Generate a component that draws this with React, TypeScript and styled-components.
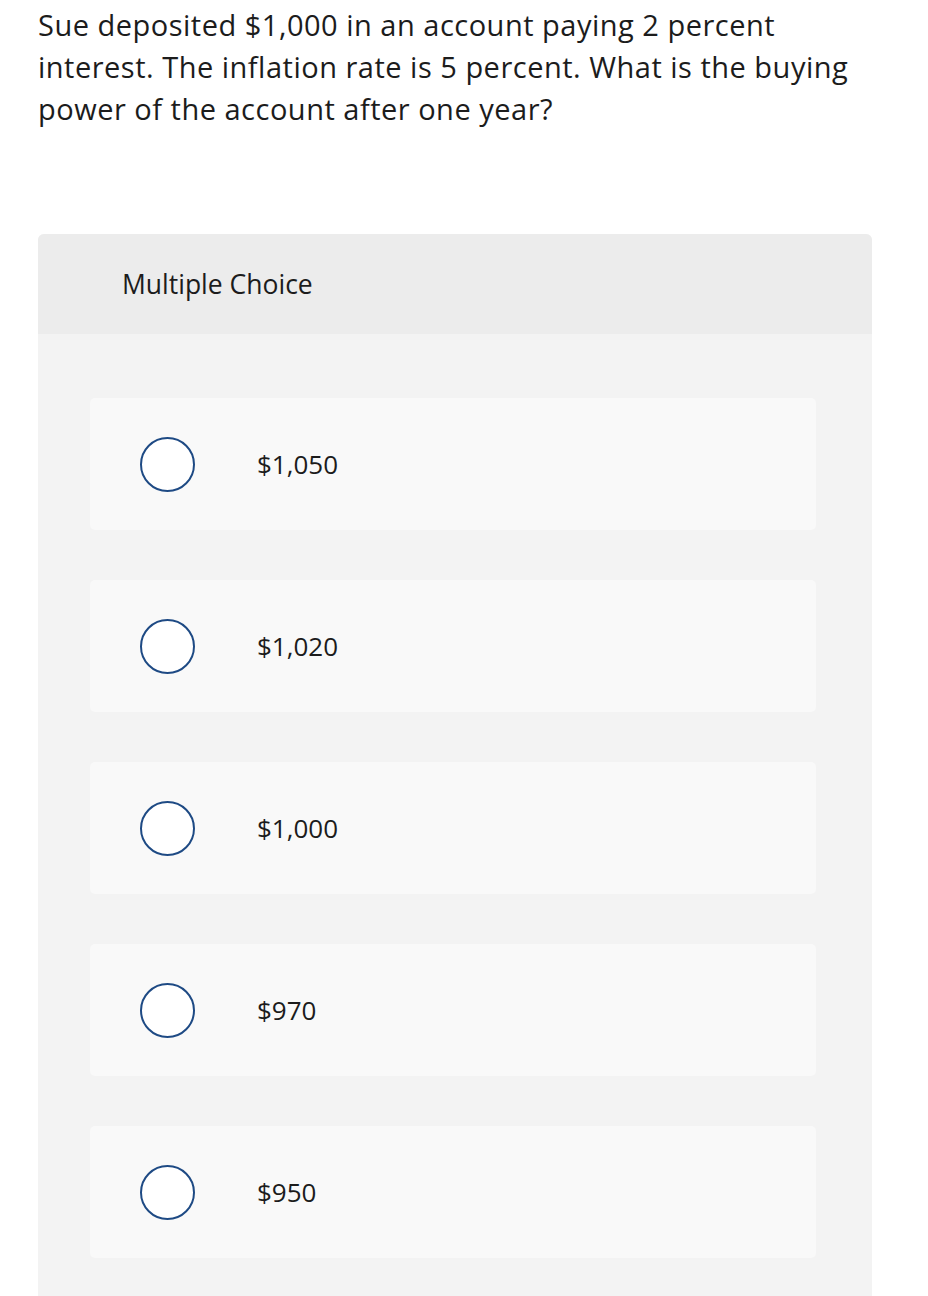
import React from 'react';
import styled, { createGlobalStyle } from 'styled-components';

const GlobalStyle = createGlobalStyle`
  html, body {
    margin: 0;
    padding: 0;
    background: #ffffff;
  }
  body {
    font-family: "Open Sans", Lato, "Liberation Sans", sans-serif;
    color: #1c1c1c;
  }
`;

const Page = styled.div`
  width: 928px;
  padding: 0 56px 0 38px;
  box-sizing: border-box;
`;

const Question = styled.p`
  margin: 0;
  padding-top: 4px;
  font-size: 29px;
  letter-spacing: 0.5px;
  line-height: 42px;
  white-space: nowrap;
  color: #1c1c1c;
`;

const Card = styled.section`
  margin-top: 104px;
  border-radius: 6px 6px 0 0;
  overflow: hidden;
  background: #f3f3f3;
`;

const CardHeader = styled.div`
  height: 100px;
  display: flex;
  align-items: center;
  padding-left: 84px;
  background: #ececec;
  font-size: 26.5px;
  color: #1c1c1c;
`;

const OptionList = styled.div`
  display: flex;
  flex-direction: column;
  gap: 50px;
  padding: 64px 56px 40px 52px;
`;

const Option = styled.label`
  display: flex;
  align-items: center;
  height: 132px;
  padding-left: 50px;
  border-radius: 5px;
  background: #f9f9f9;
  cursor: pointer;
`;

const Radio = styled.span`
  width: 55px;
  height: 55px;
  box-sizing: border-box;
  border-radius: 50%;
  border: 2px solid #1e4a84;
  background: #ffffff;
  flex-shrink: 0;
`;

const OptionText = styled.span`
  margin-left: 62px;
  font-size: 26px;
  color: #1c1c1c;
`;

const choices = ['$1,050', '$1,020', '$1,000', '$970', '$950'];

export default function App() {
  return (
    <Page>
      <GlobalStyle />
      <Question>
        Sue deposited $1,000 in an account paying 2 percent
        <br />
        interest. The inflation rate is 5 percent. What is the buying
        <br />
        power of the account after one year?
      </Question>
      <Card>
        <CardHeader>Multiple Choice</CardHeader>
        <OptionList>
          {choices.map((c) => (
            <Option key={c}>
              <Radio />
              <OptionText>{c}</OptionText>
            </Option>
          ))}
        </OptionList>
      </Card>
    </Page>
  );
}
